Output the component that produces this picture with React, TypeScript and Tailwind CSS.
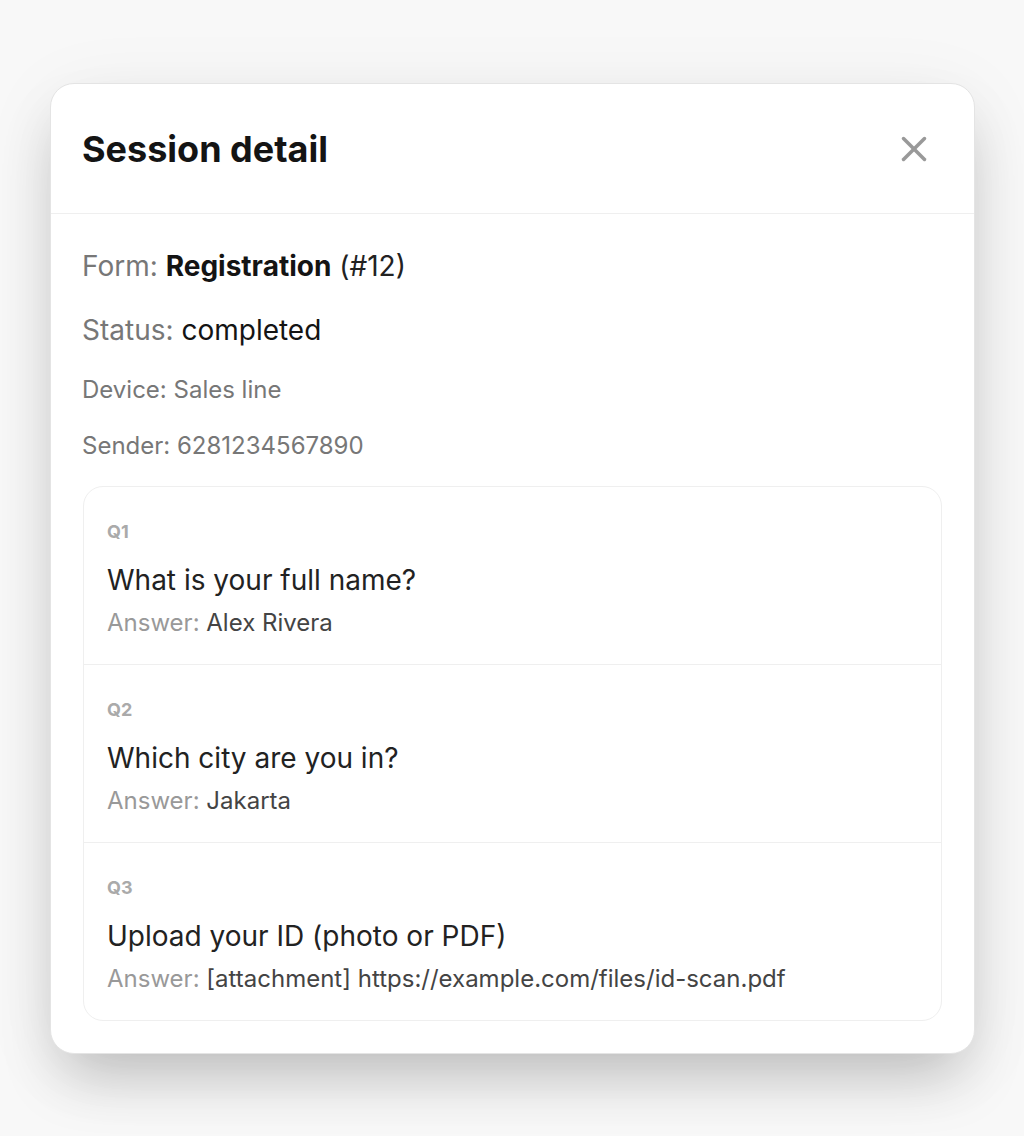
import { X } from 'lucide-react'

type Question = {
  key: string
  label: string
  answer: string
}

const questions: Question[] = [
  { key: 'Q1', label: 'What is your full name?', answer: 'Alex Rivera' },
  { key: 'Q2', label: 'Which city are you in?', answer: 'Jakarta' },
  { key: 'Q3', label: 'Upload your ID (photo or PDF)', answer: '[attachment] https://example.com/files/id-scan.pdf' },
]

export default function App() {
  return (
    <div
      className="min-h-[1136px] bg-[#f8f8f8] pt-[83px] pl-[50px]"
      style={{ fontFamily: 'Inter, "Noto Sans", sans-serif' }}
    >
      <div className="w-[925px] rounded-[24px] border border-[#e4e4e4] bg-white shadow-[0_32px_60px_-12px_rgba(0,0,0,0.22),0_12px_80px_rgba(0,0,0,0.06)]">
        {/* Header */}
        <div className="flex h-[130px] items-center justify-between border-b border-[#efefef] pr-[32px] pl-[31px]">
          <h2 className="text-[36px] font-bold text-[#141414]">Session detail</h2>
          <button className="mr-[7px] flex h-[42px] w-[42px] items-center justify-center text-[#999]">
            <X size={42} strokeWidth={2} />
          </button>
        </div>

        {/* Body */}
        <div className="pt-[34px] pr-[32px] pb-[32px] pl-[31px]">
          <p className="text-[28px] leading-[36px] text-[#777]">
            Form: <span className="font-bold text-[#141414]">Registration</span>{' '}
            <span className="text-[#222]">(#12)</span>
          </p>
          <p className="mt-[28px] text-[28px] leading-[36px] text-[#777]">
            Status: <span className="text-[#141414]">completed</span>
          </p>
          <p className="mt-[26px] text-[24px] leading-[32px] text-[#777]">Device: Sales line</p>
          <p className="mt-[24px] text-[24px] leading-[32px] text-[#777]">Sender: 6281234567890</p>

          <div className="mt-[24px] ml-[1px] overflow-hidden rounded-[20px] border border-[#efefef]">
            {questions.map((q, i) => (
              <div
                key={q.key}
                className={
                  i > 0
                    ? 'border-t border-[#efefef] px-[23px] pt-[33px] pb-[25px]'
                    : 'px-[23px] pt-[33px] pb-[25px]'
                }
              >
                <div className="text-[18px] leading-[24px] font-bold text-[#aaa]">{q.key}</div>
                <div className="mt-[18px] text-[28px] leading-[36px] text-[#222]">{q.label}</div>
                <div className="mt-[9px] text-[24px] leading-[32px] text-[#444]">
                  <span className="text-[#999]">Answer:</span> {q.answer}
                </div>
              </div>
            ))}
          </div>
        </div>
      </div>
    </div>
  )
}
